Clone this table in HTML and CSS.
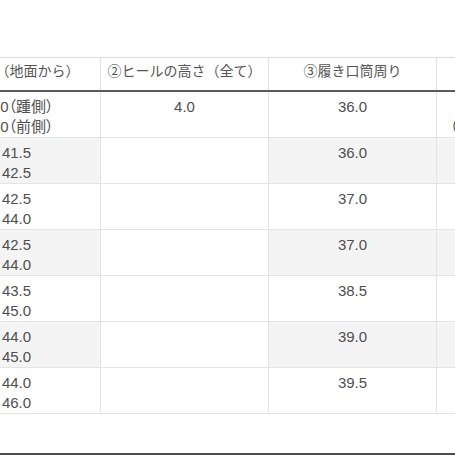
FILE: index.html
```html
<!DOCTYPE html>
<html lang="ja">
<head>
<meta charset="utf-8">
<link rel="stylesheet" href="styles.css">
</head>
<body>
<div class="page">
  <table class="size-table">
    <colgroup>
      <col class="c"><col class="c"><col class="c"><col class="c">
    </colgroup>
    <thead>
      <tr>
        <th>①筒丈（地面から）</th>
        <th>②ヒールの高さ（全て）</th>
        <th>③履き口筒周り</th>
        <th>④ふくらはぎ周り</th>
      </tr>
    </thead>
    <tbody>
      <tr>
        <td>40.0（踵側）<br>40.0（前側）</td>
        <td class="heel">4.0</td>
        <td>36.0</td>
        <td class="nowrap">38.0<br>（ふくらはぎ一番太い）</td>
      </tr>
      <tr class="alt">
        <td>41.5<br>42.5</td>
        <td class="heel"></td>
        <td>36.0</td>
        <td>38.0</td>
      </tr>
      <tr>
        <td>42.5<br>44.0</td>
        <td class="heel"></td>
        <td>37.0</td>
        <td>39.0</td>
      </tr>
      <tr class="alt">
        <td>42.5<br>44.0</td>
        <td class="heel"></td>
        <td>37.0</td>
        <td>39.0</td>
      </tr>
      <tr>
        <td>43.5<br>45.0</td>
        <td class="heel"></td>
        <td>38.5</td>
        <td>40.5</td>
      </tr>
      <tr class="alt">
        <td>44.0<br>45.0</td>
        <td class="heel"></td>
        <td>39.0</td>
        <td>41.0</td>
      </tr>
      <tr>
        <td>44.0<br>46.0</td>
        <td class="heel"></td>
        <td>39.5</td>
        <td>41.5</td>
      </tr>
    </tbody>
  </table>
  <div class="bottom-bar"></div>
</div>
</body>
</html>
```

FILE: styles.css
```css
html, body {
  margin: 0;
  padding: 0;
  background: #ffffff;
}

body {
  width: 455px;
  height: 455px;
  overflow: hidden;
  font-family: "Liberation Sans", "Noto Sans CJK JP", sans-serif;
  color: #4f4f4f;
}

.page {
  height: 455px;
  display: flex;
  flex-direction: column;
  padding-top: 57px;
  box-sizing: border-box;
}

.size-table {
  border-collapse: collapse;
  table-layout: fixed;
  width: 672px;
  margin-left: -68px;
  font-size: 14px;
  line-height: 20px;
}

.size-table col.c {
  width: 168px;
}

.size-table th {
  font-weight: normal;
  font-family: "Noto Sans CJK JP", sans-serif;
  text-align: center;
  white-space: nowrap;
  padding: 2px 6px 10px;
  border-top: 1px solid #dcdcdc;
  border-left: 1px solid #e2e2e2;
  border-right: 1px solid #e2e2e2;
  border-bottom: 2px solid #5a5a5a;
  color: #555555;
}

.size-table td {
  text-align: center;
  vertical-align: top;
  padding: 5px 6px 0;
  height: 40px;
  border: 1px solid #e4e4e4;
  background: #ffffff;
  font-size: 15px;
  font-family: "Liberation Sans", "Noto Sans CJK JP", sans-serif;
}

.size-table td:first-child {
  font-feature-settings: "palt" 1;
}

.size-table tr.alt td {
  background: #f4f4f4;
}

.size-table tr.alt td.heel {
  background: #ffffff;
}

.nowrap {
  white-space: nowrap;
}

.bottom-bar {
  margin-top: auto;
  height: 2px;
  background: #4e4e4e;
}
```
